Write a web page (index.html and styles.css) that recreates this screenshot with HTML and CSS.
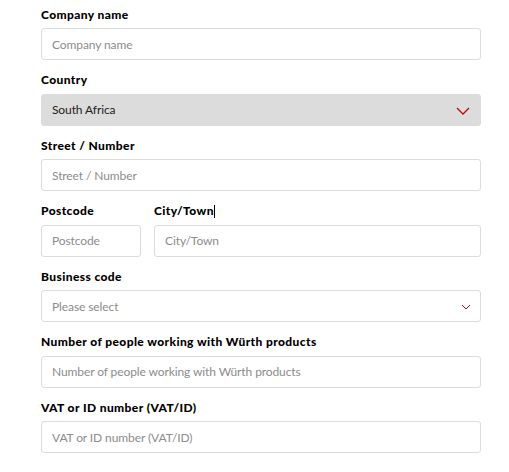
FILE: index.html
```html
<!DOCTYPE html>
<html lang="en">
<head>
<meta charset="utf-8">
<title>Company form</title>
<link rel="stylesheet" href="styles.css">
</head>
<body>
<form class="form">
  <div class="field">
    <label class="label">Company name</label>
    <input class="input" type="text" placeholder="Company name">
  </div>
  <div class="field">
    <label class="label">Country</label>
    <div class="select-wrap">
      <div class="select select--filled">South Africa</div>
      <svg class="chevron chevron--lg" width="14" height="8" viewBox="0 0 14 8"><path d="M1 1 L7 7 L13 1" fill="none" stroke="#cc0000" stroke-width="1.3"/></svg>
    </div>
  </div>
  <div class="field">
    <label class="label">Street / Number</label>
    <input class="input" type="text" placeholder="Street / Number">
  </div>
  <div class="field-row">
    <div class="field field--small">
      <label class="label">Postcode</label>
      <input class="input" type="text" placeholder="Postcode">
    </div>
    <div class="field field--grow">
      <label class="label">City/Town<span class="caret"></span></label>
      <input class="input" type="text" placeholder="City/Town">
    </div>
  </div>
  <div class="field">
    <label class="label">Business code</label>
    <div class="select-wrap">
      <div class="select select--empty">Please select</div>
      <svg class="chevron chevron--sm" width="10" height="6" viewBox="0 0 10 6"><path d="M1 1 L5 5 L9 1" fill="none" stroke="#cc0000" stroke-width="1"/></svg>
    </div>
  </div>
  <div class="field">
    <label class="label">Number of people working with Würth products</label>
    <input class="input" type="text" placeholder="Number of people working with Würth products">
  </div>
  <div class="field">
    <label class="label">VAT or ID number (VAT/ID)</label>
    <input class="input" type="text" placeholder="VAT or ID number (VAT/ID)">
  </div>
</form>
</body>
</html>
```

FILE: styles.css
```css
html, body {
  margin: 0;
  padding: 0;
  background: #ffffff;
}
body {
  font-family: "Lato", "Liberation Sans", sans-serif;
  color: #000;
}
.form {
  width: 440px;
  padding: 6.5px 0 0 41px;
  display: flex;
  flex-direction: column;
  gap: 12px;
}
.field {
  display: flex;
  flex-direction: column;
}
.field-row {
  display: flex;
  gap: 13px;
}
.field--small {
  width: 100px;
  flex: none;
}
.field--grow {
  flex: 1;
}
.label {
  font-weight: 900;
  font-size: 12px;
  line-height: 16px;
  margin-bottom: 5.5px;
  letter-spacing: 0.4px;
  display: flex;
  align-items: center;
}
.caret {
  display: inline-block;
  width: 1px;
  height: 13px;
  background: #000;
  margin-left: 0;
}
.input, .select {
  box-sizing: border-box;
  height: 32px;
  width: 100%;
  border: 1px solid #dcdcdc;
  border-radius: 3px;
  padding: 0 10px;
  font-family: "Lato", "Liberation Sans", sans-serif;
  font-size: 12px;
  letter-spacing: -0.1px;
  color: #333;
  background: #fff;
  outline: none;
  margin: 0;
}
.input::placeholder {
  color: #8c8c8c;
  opacity: 1;
}
.select {
  display: flex;
  align-items: center;
}
.select--filled {
  background: #dcdcdc;
  border-color: #dcdcdc;
  color: #222;
}
.select--empty {
  color: #8c8c8c;
}
.select-wrap {
  position: relative;
}
.chevron {
  position: absolute;
  top: 50%;
}
.chevron--lg {
  right: 11px;
  margin-top: -3px;
}
.chevron--sm {
  right: 10px;
  margin-top: -2px;
}
```
